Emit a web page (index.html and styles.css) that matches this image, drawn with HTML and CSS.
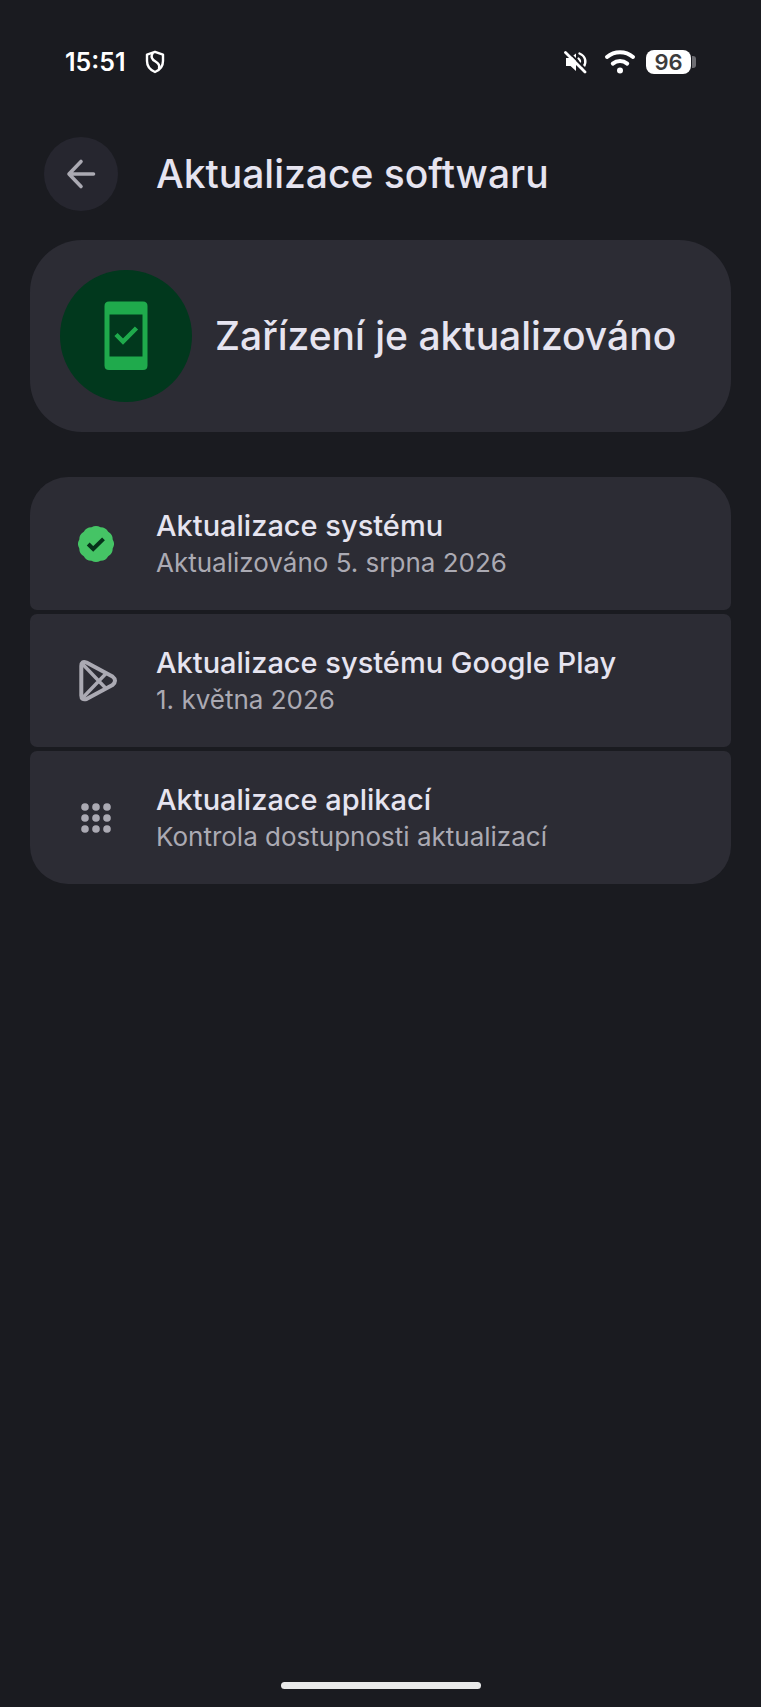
FILE: index.html
```html
<!DOCTYPE html>
<html lang="cs">
<head>
    <meta charset="UTF-8">
    <meta name="viewport" content="width=device-width, initial-scale=1.0">
    <title>Aktualizace softwaru</title>
    <link rel="stylesheet" href="styles.css">
</head>
<body>
    <div class="status-bar">
        <div class="status-group">
            <span class="clock">15:51</span>
            <svg class="shield" viewBox="0 0 20 24" width="20" height="24" fill="none" stroke="currentColor" stroke-linejoin="round" stroke-linecap="round">
                <path stroke-width="2.4" d="M10 1.8 L18 4.6 V11 C18 16.5 14.8 20 10 22 C5.2 20 2 16.5 2 11 V4.6 Z"/>
                <path stroke-width="2.4" d="M7.5 3.5 C5.5 7 7 9.5 10.5 11.5 C14 13.5 14.8 15.5 14 18"/>
            </svg>
        </div>
        <div class="status-group status-right">
            <svg class="mute" viewBox="0 0 24 24" width="24" height="24" fill="none" stroke="currentColor" stroke-linecap="round">
                <path fill="currentColor" stroke="none" d="M2 8 H6 L12 3.5 V21 L6.5 16 H2 Z"/>
                <path stroke-width="2.2" d="M14.5 8.5 C16 9.8 16.3 11.5 15.8 13"/>
                <path stroke-width="2.4" d="M15.5 3.5 C21.5 6 23 12 19.5 17"/>
                <path class="slash-gap" stroke-width="2" d="M3.5 1 L23 20.5"/>
                <path stroke-width="2.8" d="M1.5 2.5 L21 22"/>
            </svg>
            <div class="status-group signal">
                <svg class="wifi" viewBox="0 0 32 24" width="32" height="24" fill="none" stroke="currentColor" stroke-linecap="round">
                    <path stroke-width="4" d="M3 7 C10.5 0.5 21.5 0.5 29 7"/>
                    <path stroke-width="4" d="M8.8 13.6 C13 10.2 19 10.2 23.2 13.6"/>
                    <circle cx="16" cy="20.5" r="3" fill="currentColor" stroke="none"/>
                </svg>
                <div class="battery">
                    <span class="battery-level">96</span>
                    <span class="battery-tip"></span>
                </div>
            </div>
        </div>
    </div>

    <header class="app-bar">
        <button class="back-btn" type="button" aria-label="Zpět">
            <svg viewBox="0 0 32 32" width="32" height="32" fill="none" stroke="currentColor" stroke-width="3.6" stroke-linecap="round" stroke-linejoin="round">
                <path d="M28.5 16 H4 M16 3.5 L4 16 L16 28.5"/>
            </svg>
        </button>
        <h1>Aktualizace softwaru</h1>
    </header>

    <main>
        <section class="hero">
            <div class="hero-icon">
                <svg viewBox="0 0 44 70" width="44" height="70">
                    <path fill="currentColor" fill-rule="evenodd" d="M5 0.5 H39 Q43.5 0.5 43.5 5 V64.5 Q43.5 69 39 69 H5 Q0.5 69 0.5 64.5 V5 Q0.5 0.5 5 0.5 Z M5.5 13.5 V55.5 H38.5 V13.5 Z"/>
                    <path fill="none" stroke="currentColor" stroke-width="4.5" d="M12 33.5 L19 40.5 L32.5 27"/>
                </svg>
            </div>
            <h2>Zařízení je aktualizováno</h2>
        </section>

        <nav class="update-list">
            <a class="row" href="#system">
                <svg class="row-icon" viewBox="-24 -24 48 48" width="48" height="48">
                    <path class="badge" d="M-4.5 -16.7 Q0 -19.4 4.5 -16.7 Q9.7 -16.8 12.2 -12.2 Q16.8 -9.7 16.7 -4.5 Q19.4 0 16.7 4.5 Q16.8 9.7 12.2 12.2 Q9.7 16.8 4.5 16.7 Q0 19.4 -4.5 16.7 Q-9.7 16.8 -12.2 12.2 Q-16.8 9.7 -16.7 4.5 Q-19.4 0 -16.7 -4.5 Q-16.8 -9.7 -12.2 -12.2 Q-9.7 -16.8 -4.5 -16.7 Z"/>
                    <path class="badge-check" d="M-7.8 0 L-2.8 5 L7.5 -5.2"/>
                </svg>
                <span class="row-text">
                    <span class="row-title">Aktualizace systému</span>
                    <span class="row-sub">Aktualizováno 5. srpna 2026</span>
                </span>
            </a>
            <a class="row" href="#google-play">
                <svg class="row-icon" viewBox="0 0 48 48" width="48" height="48" fill="none" stroke="currentColor" stroke-width="4" stroke-linejoin="round">
                    <path d="M9.3 9 Q9.3 3.5 14.5 5.5 L40.5 19.5 Q45.5 23.5 40.5 28 L14.5 42 Q9.3 43.5 9.3 38.5 Z"/>
                    <path stroke-width="3.4" d="M10 6.5 L34.5 32 M10 41.5 L34.5 16"/>
                </svg>
                <span class="row-text">
                    <span class="row-title">Aktualizace systému Google Play</span>
                    <span class="row-sub">1. května 2026</span>
                </span>
            </a>
            <a class="row" href="#aplikace">
                <svg class="row-icon" viewBox="0 0 48 48" width="48" height="48" fill="currentColor">
                    <circle cx="13" cy="13" r="3.8"/><circle cx="24" cy="13" r="3.8"/><circle cx="35" cy="13" r="3.8"/>
                    <circle cx="13" cy="24" r="3.8"/><circle cx="24" cy="24" r="3.8"/><circle cx="35" cy="24" r="3.8"/>
                    <circle cx="13" cy="35" r="3.8"/><circle cx="24" cy="35" r="3.8"/><circle cx="35" cy="35" r="3.8"/>
                </svg>
                <span class="row-text">
                    <span class="row-title">Aktualizace aplikací</span>
                    <span class="row-sub">Kontrola dostupnosti aktualizací</span>
                </span>
            </a>
        </nav>
    </main>

    <div class="home-bar"></div>
</body>
</html>
```
FILE: styles.css
```css
:root{
    --bg:#1a1b20;
    --surface:#2c2c34;
    --button:#26262f;
    --text:#e6e4f0;
    --muted:#abaab3;
    --green:#1faa4c;
    --green-light:#45c465;
    --green-dark:#01381d;
}

*{margin:0;padding:0;box-sizing:border-box;}
body{
    min-height:100vh;
    display:flex;flex-direction:column;
    background:var(--bg);
    color:var(--text);
    font-family:Inter,Roboto,sans-serif;
}

/* ========= STATUS BAR ========= */
.status-bar{
    display:flex;justify-content:space-between;align-items:center;
    height:124px;padding:0 65px;
    color:#fff;
}
.status-group{display:flex;align-items:center;gap:19px;}
.status-right{gap:16px;}
.signal{gap:10px;}
.clock{font-size:25px;line-height:32px;font-weight:600;}
.slash-gap{stroke:var(--bg);}
.battery{display:flex;align-items:center;gap:1px;}
.battery-level{
    width:45px;height:24px;border-radius:8px;
    background:#fff;color:#3c3c3c;
    font-size:22px;line-height:24px;font-weight:600;text-align:center;
}
.battery-tip{width:4px;height:12px;border-radius:0 3px 3px 0;background:#6d6d72;}

/* ========= APP BAR ========= */
.app-bar{
    display:flex;align-items:center;gap:38px;
    padding:13px 44px 0;
}
.back-btn{
    display:flex;align-items:center;justify-content:center;
    width:74px;height:74px;border:none;border-radius:50%;
    background:var(--button);color:var(--muted);
}
h1,h2{font-size:39px;line-height:48px;font-weight:500;}

/* ========= HERO ========= */
main{padding:29px 30px 0;}
.hero{
    display:flex;align-items:center;gap:23px;
    padding:30px;border-radius:52px;
    background:var(--surface);
}
.hero-icon{
    display:flex;align-items:center;justify-content:center;flex-shrink:0;
    width:132px;height:132px;border-radius:50%;
    background:var(--green-dark);color:var(--green);
}

/* ========= UPDATE LIST ========= */
.update-list{
    display:flex;flex-direction:column;gap:4px;
    margin-top:45px;border-radius:38px;overflow:hidden;
}
.row{
    display:flex;align-items:center;gap:36px;
    padding:30px 42px;border-radius:7px;
    background:var(--surface);color:var(--text);text-decoration:none;
}
.row-icon{flex-shrink:0;color:var(--muted);}
.row-text{display:flex;flex-direction:column;}
.row-title{font-size:29px;line-height:38px;font-weight:500;}
.row-sub{font-size:26px;line-height:35px;color:var(--muted);}
.badge{fill:var(--green-light);}
.badge-check{fill:none;stroke:#06321a;stroke-width:4;}

/* ========= HOME BAR ========= */
.home-bar{
    width:200px;height:7px;border-radius:4px;
    margin:auto auto 18px;
    background:#e9eaea;
}
```
